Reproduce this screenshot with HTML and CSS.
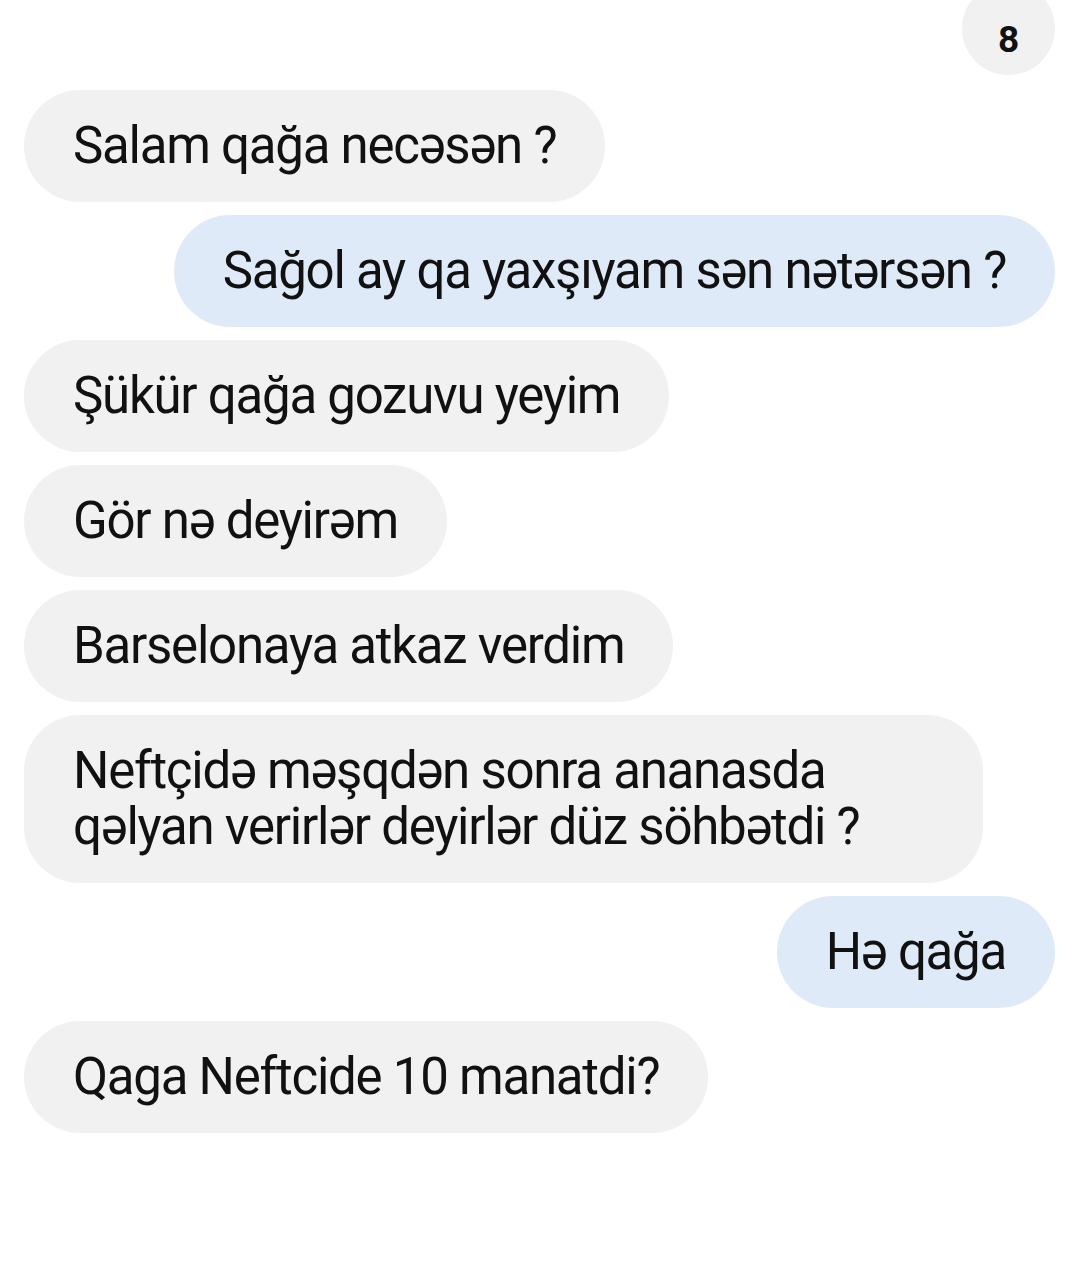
FILE: index.html
```html
<!DOCTYPE html>
<html lang="az">
<head>
<meta charset="utf-8">
<link rel="stylesheet" href="styles.css">
</head>
<body>
<div class="chat">
  <div class="badge-row"><div class="badge">8</div></div>
  <div class="msg in">Salam qağa necəsən ?</div>
  <div class="msg out">Sağol ay qa yaxşıyam sən nətərsən ?</div>
  <div class="msg in">Şükür qağa gozuvu yeyim</div>
  <div class="msg in">Gör nə deyirəm</div>
  <div class="msg in">Barselonaya atkaz verdim</div>
  <div class="msg in">Neftçidə məşqdən sonra ananasda qəlyan verirlər deyirlər düz söhbətdi ?</div>
  <div class="msg out">Hə qağa</div>
  <div class="msg in">Qaga Neftcide 10 manatdi?</div>
</div>
</body>
</html>
```

FILE: styles.css
```css
html, body {
  margin: 0;
  padding: 0;
  background: #ffffff;
}
body {
  width: 1080px;
  height: 1272px;
  overflow: hidden;
  font-family: Roboto, "Liberation Sans", sans-serif;
  color: #111111;
}
.chat {
  display: flex;
  flex-direction: column;
  gap: 13px;
  padding: 0 25px 0 24px;
}
.badge-row {
  display: flex;
  justify-content: flex-end;
  height: 76px;
  margin-bottom: 1px;
}
.badge {
  width: 93px;
  height: 93px;
  margin-top: -18px;
  border-radius: 50%;
  background: #f1f1f1;
  display: flex;
  justify-content: center;
  align-items: center;
  padding-top: 22px;
  box-sizing: border-box;
  font-size: 37px;
  font-weight: 700;
  color: #111111;
}
.msg {
  box-sizing: border-box;
  max-width: 959px;
  padding: 28px 49px;
  font-size: 51px;
  letter-spacing: -1.25px;
  line-height: 56px;
  border-radius: 56px;
}
.in {
  align-self: flex-start;
  background: #f1f1f1;
}
.out {
  align-self: flex-end;
  background: #deeaf8;
}
```
